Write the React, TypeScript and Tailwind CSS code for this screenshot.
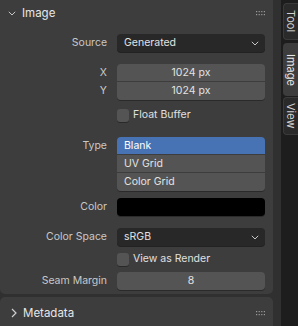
import React from "react";

const font = { fontFamily: 'Inter, "DejaVu Sans", sans-serif' };

function Grip() {
  return (
    <svg width="10" height="5" viewBox="0 0 10 5" className="block">
      {[0, 1, 2, 3].map((i) =>
        [0, 1].map((j) => (
          <rect key={`${i}-${j}`} x={i * 2.6} y={j * 3} width="1.2" height="1.2" fill="#9a9a9a" />
        ))
      )}
    </svg>
  );
}

function ChevronDown({ color = "#cfcfcf", w = 8 }: { color?: string; w?: number }) {
  return (
    <svg width={w} height={w * 0.6} viewBox="0 0 10 6" className="block">
      <path d="M1 1 L5 5 L9 1" fill="none" stroke={color} strokeWidth="1.2" />
    </svg>
  );
}

function ChevronRight() {
  return (
    <svg width="6" height="10" viewBox="0 0 6 10" className="block">
      <path d="M1 1 L5 5 L1 9" fill="none" stroke="#cfcfcf" strokeWidth="1.2" />
    </svg>
  );
}

function Label({ children }: { children?: React.ReactNode }) {
  return (
    <div className="w-[107px] shrink-0 text-right text-[10.5px] text-[#c8c8c8] leading-[18px]">
      {children}
    </div>
  );
}

function Row({ label, children, className = "" }: { label?: string; children: React.ReactNode; className?: string }) {
  return (
    <div className={`flex items-start ${className}`}>
      <Label>{label}</Label>
      <div className="ml-[10px] w-[148px]">{children}</div>
    </div>
  );
}

function Dropdown({ text }: { text: string }) {
  return (
    <div className="h-[18px] rounded-[4px] bg-[#282828] shadow-[0_1px_0_#222] flex items-center justify-between pl-[7px] pr-[6px]">
      <span className="text-[10.5px] text-[#e2e2e2]">{text}</span>
      <ChevronDown />
    </div>
  );
}

function Checkbox({ label }: { label: string }) {
  return (
    <div className="h-[18px] flex items-center">
      <div className="w-[12px] h-[13px] rounded-[3px] bg-[#545454] shadow-[0_1px_0_#2a2a2a]" />
      <span className="ml-[4px] text-[10.5px] text-[#e0e0e0]">{label}</span>
    </div>
  );
}

export default function App() {
  return (
    <div className="w-[298px] h-[326px] overflow-hidden flex bg-[#303030] select-none" style={font}>
      <div className="w-[281px] h-full flex flex-col">
        {/* Image panel */}
        <div className="w-[273px] h-[300px] bg-[#3d3d3d] rounded-br-[5px] rounded-bl-[5px] flex flex-col">
          <div className="h-[27px] flex items-center pl-[8px] pr-[7px]">
            <ChevronDown w={8} />
            <span className="ml-[6px] text-[11.5px] text-[#e6e6e6]">Image</span>
            <div className="ml-auto">
              <Grip />
            </div>
          </div>

          <Row label="Source" className="mt-[7px]">
            <Dropdown text="Generated" />
          </Row>

          <div className="mt-[12px] flex">
            <div className="w-[107px] shrink-0 text-right text-[10.5px] text-[#c8c8c8]">
              <div className="h-[18px] leading-[18px]">X</div>
              <div className="h-[18px] leading-[18px]">Y</div>
            </div>
            <div className="ml-[10px] w-[148px] rounded-[4px] overflow-hidden shadow-[0_1px_0_#2a2a2a]">
              <div className="h-[18px] bg-[#545454] text-center text-[10.5px] leading-[18px] text-[#e2e2e2] border-b border-[#3d3d3d]">1024 px</div>
              <div className="h-[18px] bg-[#545454] text-center text-[10.5px] leading-[17px] text-[#e2e2e2]">1024 px</div>
            </div>
          </div>

          <Row className="mt-[6px]">
            <Checkbox label="Float Buffer" />
          </Row>

          <Row label="Type" className="mt-[13px]">
            <div className="rounded-[4px] overflow-hidden shadow-[0_1px_0_#2a2a2a]">
              <div className="h-[18px] bg-[#4772b3] pl-[7px] text-[10.5px] leading-[18px] text-white border-b border-[#3d3d3d]">Blank</div>
              <div className="h-[18px] bg-[#545454] pl-[7px] text-[10.5px] leading-[17px] text-[#e2e2e2] border-b border-[#3d3d3d]">UV Grid</div>
              <div className="h-[18px] bg-[#545454] pl-[7px] text-[10.5px] leading-[18px] text-[#e2e2e2]">Color Grid</div>
            </div>
          </Row>

          <Row label="Color" className="mt-[7px]">
            <div className="h-[18px] rounded-[4px] bg-black shadow-[0_1px_0_#2a2a2a]" />
          </Row>

          <Row label="Color Space" className="mt-[12px]">
            <Dropdown text="sRGB" />
          </Row>

          <Row className="mt-[4px]">
            <Checkbox label="View as Render" />
          </Row>

          <Row label="Seam Margin" className="mt-[4px]">
            <div className="h-[18px] rounded-[4px] bg-[#545454] text-center text-[10.5px] leading-[18px] text-[#e2e2e2] shadow-[0_1px_0_#2a2a2a]">8</div>
          </Row>
        </div>

        {/* Metadata panel */}
        <div className="mt-[3px] w-[273px] h-[30px] bg-[#3d3d3d] rounded-t-[5px] flex items-start pt-[5px] pl-[11px] pr-[7px]">
          <div className="h-[22px] flex items-center"><ChevronRight /></div>
          <span className="ml-[6px] text-[11.5px] text-[#e6e6e6] leading-[22px]">Metadata</span>
          <div className="ml-auto mt-[9px]">
            <Grip />
          </div>
        </div>
      </div>

      {/* Tab strip */}
      <div className="w-[17px] h-full bg-[#1d1d1d] flex flex-col pt-[3px] items-end">
        <div className="w-[15px] h-[37px] bg-[#2a2a2a] rounded-l-[4px] border border-r-0 border-[#3a3a3a] flex items-center justify-center">
          <span className="text-[11px] text-[#d0d0d0]" style={{ writingMode: "vertical-rl" }}>Tool</span>
        </div>
        <div className="mt-[3px] w-[15px] h-[53px] bg-[#3d3d3d] rounded-l-[4px] flex items-center justify-center">
          <span className="text-[11px] text-[#e6e6e6]" style={{ writingMode: "vertical-rl" }}>Image</span>
        </div>
        <div className="mt-[1px] w-[15px] h-[38px] bg-[#2a2a2a] rounded-l-[4px] border border-r-0 border-[#3a3a3a] flex items-center justify-center">
          <span className="text-[11px] text-[#d0d0d0]" style={{ writingMode: "vertical-rl" }}>View</span>
        </div>
      </div>
    </div>
  );
}
